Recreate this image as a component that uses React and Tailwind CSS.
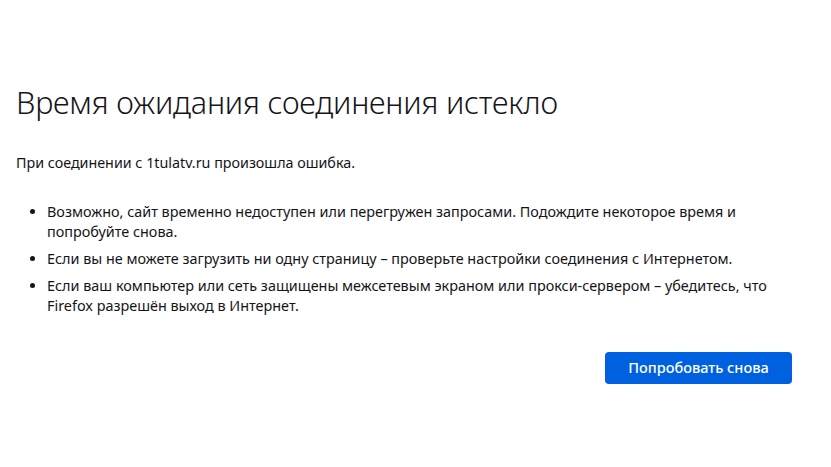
const tips = [
  <>Возможно, сайт временно недоступен или перегружен запросами. Подождите некоторое время и<br />попробуйте снова.</>,
  <>Если вы не можете загрузить ни одну страницу – проверьте настройки соединения с Интернетом.</>,
  <>Если ваш компьютер или сеть защищены межсетевым экраном или прокси-сервером – убедитесь, что<br />Firefox разрешён выход в Интернет.</>,
];

export default function App() {
  return (
    <div className="min-h-screen w-[831px] h-[467px] bg-white text-[#15141a] font-['Noto_Sans','Open_Sans',sans-serif]">
      <div className="w-[776px] ml-[16px] pt-[82px]">
        <h1 className="text-[30.6px] leading-[40px] font-light tracking-[-0.2px] whitespace-nowrap">
          Время ожидания соединения истекло
        </h1>
        <p className="mt-[31px] text-[14.3px] leading-[20px]">При соединении с 1tulatv.ru произошла ошибка.</p>
        <ul className="mt-[29px] pl-[31px] list-disc text-[14.4px] leading-[20px] whitespace-nowrap">
          {tips.map((t, i) => (
            <li key={i} className="mb-[7px]">{t}</li>
          ))}
        </ul>
        <div className="flex justify-end mt-[36px]">
          <button className="h-[32px] w-[187px] rounded-[4px] bg-[#0061e0] text-white text-[14.5px] font-medium">
            Попробовать снова
          </button>
        </div>
      </div>
    </div>
  );
}
